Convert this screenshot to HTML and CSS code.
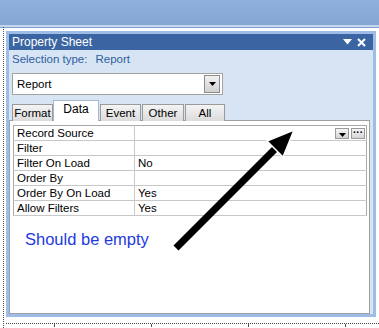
FILE: index.html
```html
<!DOCTYPE html>
<html lang="en">
  <head>
    <meta charset="UTF-8" />
    <title>Property Sheet</title>
    <link rel="stylesheet" href="styles.css">
  </head>

  <body>
    <div class="ribbon"></div>
    <div class="workspace">
      <div class="sheet">
        <div class="title">
          <span>Property Sheet</span>
          <span class="title-icons">
            <svg width="9" height="6" viewBox="0 0 9 6"><path d="M0 0H9L4.5 5.5Z" fill="#fff"/></svg>
            <svg width="9" height="9" viewBox="0 0 9 9"><path d="M1 1L8 8M8 1L1 8" stroke="#fff" stroke-width="2"/></svg>
          </span>
        </div>
        <div class="selection">Selection type:<span class="sel-value">Report</span></div>
        <div class="combo">
          <span>Report</span>
          <span class="combo-btn"><svg width="7" height="4" viewBox="0 0 7 4"><path d="M0 0H7L3.5 4Z" fill="#000"/></svg></span>
        </div>
        <div class="tabs">
          <div class="tab t-format">Format</div>
          <div class="tab active">Data</div>
          <div class="tab t-event">Event</div>
          <div class="tab t-other">Other</div>
          <div class="tab t-all">All</div>
        </div>
        <div class="content">
          <table class="props">
            <tr>
              <td class="name">Record Source</td>
              <td class="value">
                <span class="cell-btns">
                  <span class="mini"><svg width="7" height="4" viewBox="0 0 7 4"><path d="M0 0H7L3.5 4Z" fill="#000"/></svg></span>
                  <span class="mini dots">&middot;&middot;&middot;</span>
                </span>
              </td>
            </tr>
            <tr><td class="name">Filter</td><td class="value"></td></tr>
            <tr><td class="name">Filter On Load</td><td class="value">No</td></tr>
            <tr><td class="name">Order By</td><td class="value"></td></tr>
            <tr><td class="name">Order By On Load</td><td class="value">Yes</td></tr>
            <tr><td class="name">Allow Filters</td><td class="value">Yes</td></tr>
          </table>
          <div class="note">Should be empty</div>
        </div>
      </div>
      <div class="ruler">
        <span></span><span></span><span></span><span></span>
      </div>
    </div>

    <!-- annotation arrow drawn over the sheet -->
    <svg class="arrow" width="379" height="328" viewBox="0 0 379 328">
      <line x1="176" y1="248" x2="277" y2="147" stroke="#000" stroke-width="7"/>
      <path d="M294 130L267 141L283 157Z" fill="#000" stroke="#fff" stroke-width="1.5" stroke-linejoin="miter"/>
    </svg>
  </body>
</html>
```

FILE: styles.css
```css
body {
  margin: 0;
  width: 379px;
  height: 328px;
  overflow: hidden;
  position: relative;
  background: #fff;
  font-family: "Liberation Sans", Arial, sans-serif;
  font-size: 11.5px;
  color: #000;
}

/* blue band of the ribbon at the top */
.ribbon {
  height: 25px;
  background: linear-gradient(#90b0dc, #85a5d3);
  border-bottom: 2px solid #c4d7ef;
  box-shadow: 0 1px 0 #7f9fd0;
}

.workspace {
  margin-left: 3px;
  padding: 4px 0 0 2px;
  border-left: 1px dotted #555;
  height: 297px;
}

.sheet {
  width: 364px;
  border: 3px solid #9dbde6;
  background: #d6e4f3;
  display: flex;
  flex-direction: column;
}

.title {
  height: 16px;
  line-height: 16px;
  background: #3b65a2;
  color: #fff;
  font-size: 12px;
  padding-left: 3px;
  display: flex;
  justify-content: space-between;
}

.title-icons {
  display: flex;
  align-items: center;
  gap: 5px;
  padding-right: 7px;
}

.selection {
  height: 19px;
  line-height: 19px;
  padding-left: 3px;
  color: #2f5e9f;
}

.sel-value {
  margin-left: 8px;
}

.combo {
  margin: 4px 0 0 3px;
  height: 20px;
  border: 1px solid #a3a3a3;
  background: #fff;
  display: flex;
  align-items: center;
  justify-content: space-between;
  padding-left: 4px;
  width: 205px;
}

.combo-btn {
  width: 14px;
  height: 16px;
  margin-right: 2px;
  border: 1px solid #8c8c8c;
  background: linear-gradient(#f2f2f2, #d0d0d0);
  display: flex;
  align-items: center;
  justify-content: center;
}

.tabs {
  margin: 5px 0 -1px 3px;
  height: 21px;
  display: flex;
  align-items: flex-end;
  position: relative;
  z-index: 1;
}

.tab {
  box-sizing: border-box;
  height: 17px;
  line-height: 16px;
  text-align: center;
  font-size: 11.5px;
  border: 1px solid #9a9a9a;
  border-bottom: none;
  background: linear-gradient(#f4f4f4, #dcdcdc);
  margin-right: 1px;
}

.t-format {
  width: 41px;
  margin-right: 0;
}

.t-event {
  width: 41px;
}

.t-other {
  width: 42px;
}

.t-all {
  width: 40px;
}

.tab.active {
  width: 46px;
  height: 21px;
  line-height: 16px;
  font-size: 12px;
  background: #fff;
  border-color: #a8b8cc;
}

.content {
  margin-right: 3px;
  border: 1px solid #a0a0a0;
  background: #fff;
  padding: 4px 2px 0 3px;
  height: 188px;
}

.props {
  width: 354px;
  border-collapse: collapse;
  border: 1px solid #a8a8a8;
}

.props td {
  height: 14px;
  padding: 0 3px;
  border-bottom: 1px solid #c8c8c8;
  line-height: 14px;
}

.props .name {
  width: 114px;
  border-right: 1px solid #c8c8c8;
}

.cell-btns {
  float: right;
  display: flex;
  gap: 2px;
  margin-right: -2px;
}

.mini {
  width: 14px;
  height: 11px;
  border: 1px solid #9a9a9a;
  background: linear-gradient(#f6f6f6, #d4d4d4);
  display: flex;
  align-items: flex-end;
  justify-content: center;
  padding-bottom: 1px;
  box-sizing: border-box;
}

.mini.dots {
  align-items: center;
  font-size: 10px;
  font-weight: bold;
  line-height: 8px;
  padding: 0;
}

.note {
  margin: 14px 0 0 12px;
  font-size: 16.5px;
  line-height: 19px;
  color: #1d3ae0;
}

.ruler {
  margin-top: 6px;
  border-top: 1px dotted #444;
  display: flex;
  height: 3px;
}

.ruler span {
  width: 96px;
  flex: none;
  border-right: 1px solid #555;
}

.ruler span:first-child {
  width: 48px;
}

.arrow {
  position: absolute;
  left: 0;
  top: 0;
  pointer-events: none;
}
```
